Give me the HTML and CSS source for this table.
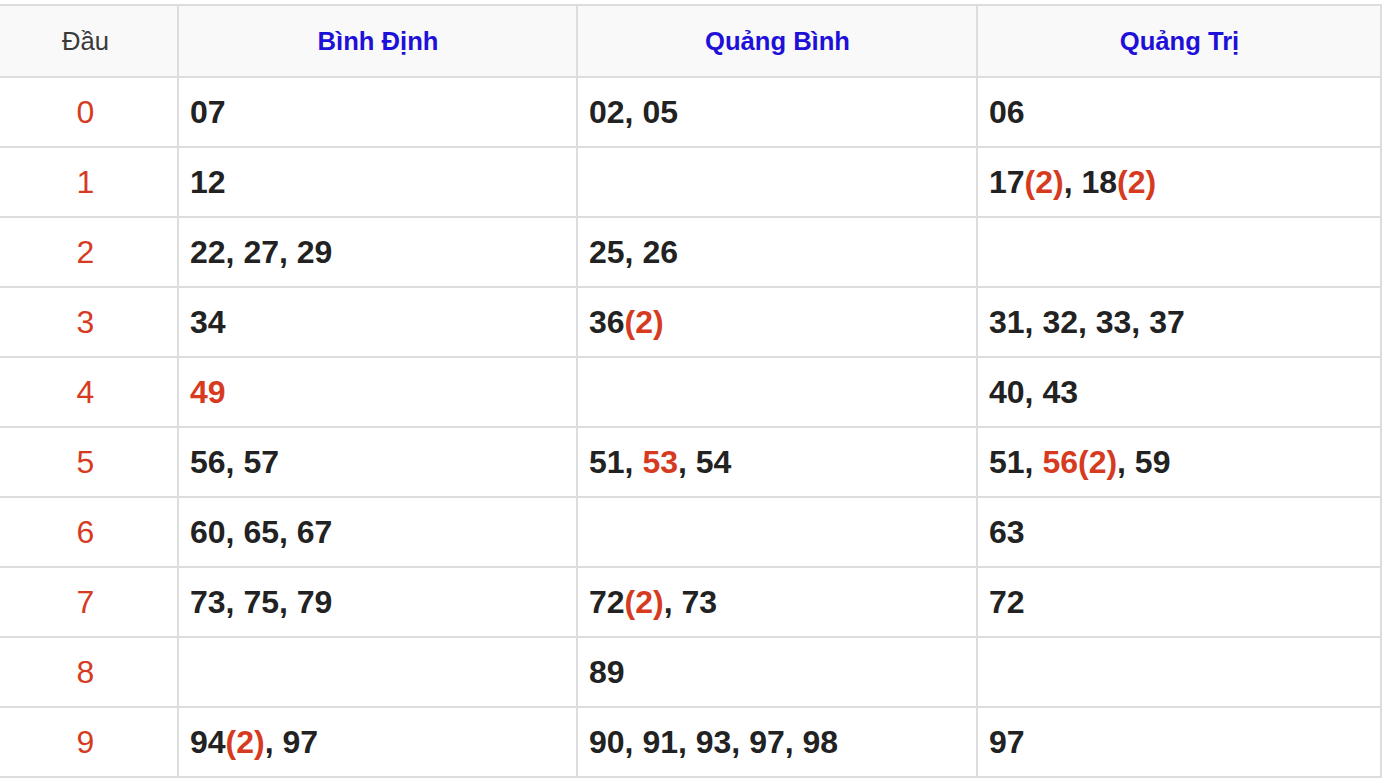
FILE: index.html
```html
<!DOCTYPE html>
<html lang="vi">
<head>
<meta charset="utf-8">
<title>Thống kê đầu lô</title>
<link rel="stylesheet" href="styles.css">
</head>
<body>
<table class="loto">
  <colgroup>
    <col class="c-head">
    <col class="c1">
    <col class="c2">
    <col class="c3">
  </colgroup>
  <thead>
    <tr>
      <th class="dau">Đầu</th>
      <th>Bình Định</th>
      <th>Quảng Bình</th>
      <th>Quảng Trị</th>
    </tr>
  </thead>
  <tbody>
    <tr><td class="num">0</td><td>07</td><td>02, 05</td><td>06</td></tr>
    <tr><td class="num">1</td><td>12</td><td></td><td>17<span class="hl">(2)</span>, 18<span class="hl">(2)</span></td></tr>
    <tr><td class="num">2</td><td>22, 27, 29</td><td>25, 26</td><td></td></tr>
    <tr><td class="num">3</td><td>34</td><td>36<span class="hl">(2)</span></td><td>31, 32, 33, 37</td></tr>
    <tr><td class="num">4</td><td><span class="hl">49</span></td><td></td><td>40, 43</td></tr>
    <tr><td class="num">5</td><td>56, 57</td><td>51, <span class="hl">53</span>, 54</td><td>51, <span class="hl">56(2)</span>, 59</td></tr>
    <tr><td class="num">6</td><td>60, 65, 67</td><td></td><td>63</td></tr>
    <tr><td class="num">7</td><td>73, 75, 79</td><td>72<span class="hl">(2)</span>, 73</td><td>72</td></tr>
    <tr><td class="num">8</td><td></td><td>89</td><td></td></tr>
    <tr><td class="num">9</td><td>94<span class="hl">(2)</span>, 97</td><td>90, 91, 93, 97, 98</td><td>97</td></tr>
  </tbody>
</table>
</body>
</html>
```
FILE: styles.css
```css
html, body {
  margin: 0;
  padding: 0;
  background: #ffffff;
}

body {
  font-family: "Liberation Sans", Arial, Helvetica, sans-serif;
  color: #222222;
}

.loto {
  border-collapse: collapse;
  table-layout: fixed;
  width: 1389px;
  margin: 4px 0 0 -9px;
}

.c-head { width: 186px; }
.c1 { width: 399px; }
.c2 { width: 400px; }
.c3 { width: 404px; }

.loto th,
.loto td {
  border: 2px solid #dddddd;
  padding: 0 10px 0 11px;
}

.loto th {
  height: 70px;
  background: #f9f9f9;
  font-size: 25.6px;
  font-weight: 700;
  color: #1e10d8;
  text-align: center;
}

.loto th.dau {
  font-weight: 400;
  color: #3a3a3a;
}

.loto td {
  height: 68px;
  font-size: 32px;
  font-weight: 700;
  color: #222222;
  text-align: left;
}

.loto td.num {
  font-weight: 400;
  color: #d63b1f;
  text-align: center;
}

.hl {
  color: #d63b1f;
}
```
